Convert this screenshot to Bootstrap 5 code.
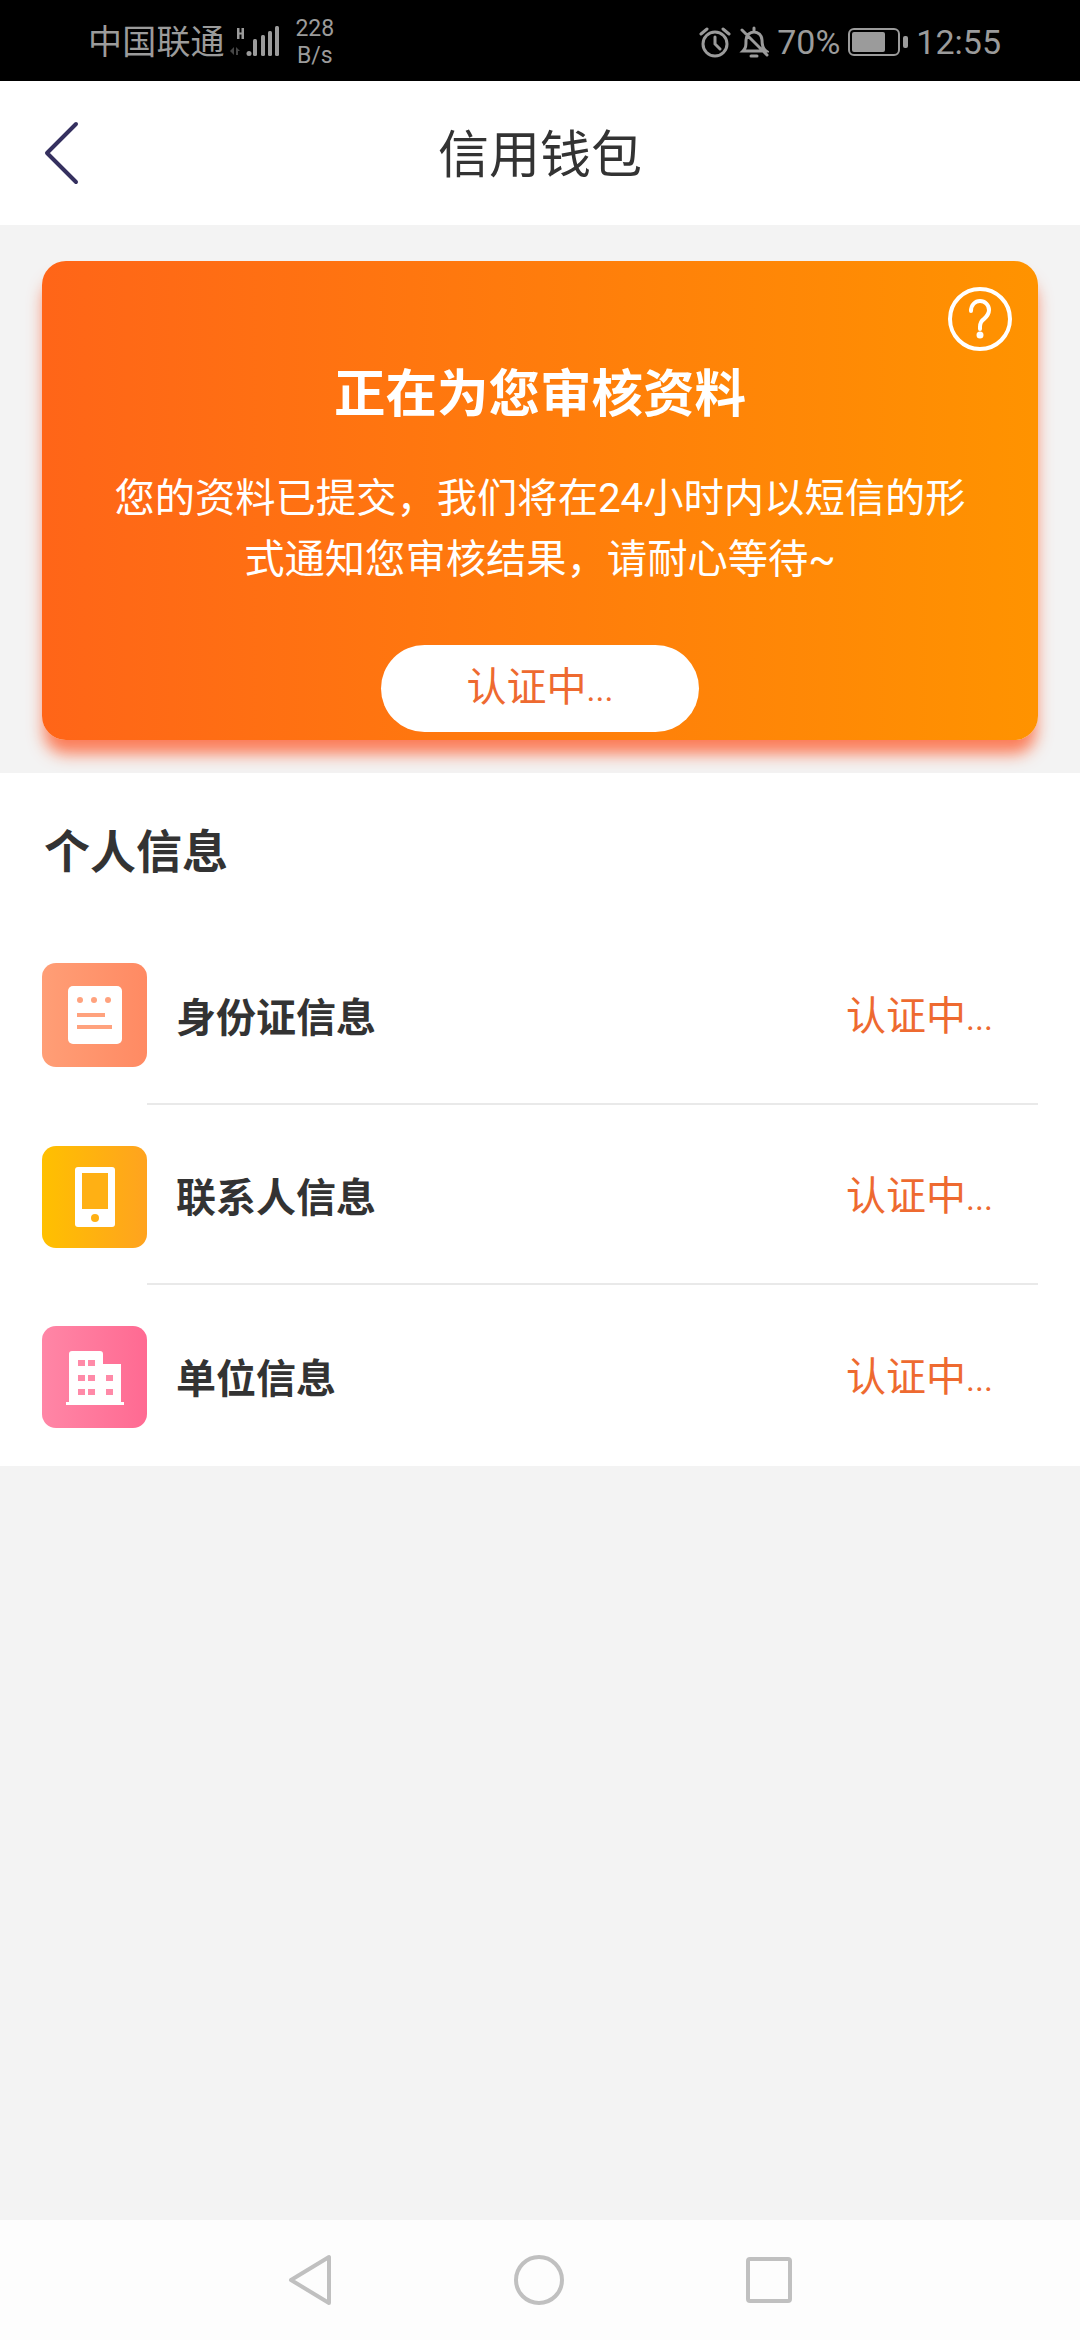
<!DOCTYPE html>
<html lang="zh-CN">
<head>
<meta charset="utf-8">
<title>信用钱包</title>
<link href="https://cdn.jsdelivr.net/npm/bootstrap@5.3.0/dist/css/bootstrap.min.css" rel="stylesheet">
<style>
html,body{height:100%;}
body{width:1080px;height:2340px;background:#f3f3f3;font-family:Roboto,"Noto Sans CJK SC",sans-serif;color:#333;overflow:hidden;}
.sbar{height:81px;background:#000;color:#9b9b9b;padding:2px 79px 0 88px;font-size:34px;line-height:1;}
.carrier{letter-spacing:.2px;}
.speed{font-size:23px;line-height:27px;width:40px;margin-left:16px;}
.topbar{height:144px;background:#fff;}
.backlink{position:absolute;left:44px;top:40px;}
.pagetitle{font-size:51px;line-height:1;color:#333;font-weight:400;margin:0;padding-top:5px;}
.band{padding:36px 42px 33px;}
.hero{height:479px;border-radius:24px;padding:101px 62px 0;color:#fff;background:linear-gradient(90deg,#ff6518 0%,#ff9300 100%);box-shadow:0 16px 16px -2px rgba(255,80,30,.72);}
.help{position:absolute;right:25px;top:25px;}
.herotitle{font-size:51.5px;line-height:66px;font-weight:700;margin:0;}
.herotext{font-size:40.3px;line-height:61px;margin:40px 0 0;}
.pill{display:block;width:318px;height:87px;line-height:80px;margin:55px auto 0;padding:0;border:0;border-radius:44px;background:#fff;color:#ee6a30;font-size:40px;}
.pill:hover,.pill:active{background:#fff!important;color:#ee6a30!important;}
.dots{font-size:34px;}
.infosec{background:#fff;height:693px;}
.sechead{height:152px;padding:5px 0 0 44px;font-size:46px;font-weight:700;line-height:1;margin:0;}
.inforow{height:180px;padding-left:42px;}
.tile{width:105px;height:104px;border-radius:14px;flex:none;}
.tile-a{background:linear-gradient(90deg,#ff9e76,#ff8a63);}
.tile-b{background:linear-gradient(90deg,#ffc000,#ffa31f);margin-top:3px;height:102px;}
.tile-c{background:linear-gradient(90deg,#ff86a6,#ff6a92);margin-top:3px;height:102px;}
.rowbody{height:100%;margin-right:42px;padding:0 45px 0 30px;border-bottom:2px solid #e9e9e9;}
.inforow:last-child .rowbody{border-bottom:0;}
.rowname{font-size:40px;font-weight:700;color:#333;line-height:1;padding-top:9px;margin-left:-1px;}
.rowstate{font-size:40px;color:#ee6a30;line-height:1;padding-top:5px;}
.spacer{flex:1 1 auto;}
.softnav{height:120px;background:#fdfdfd;padding:0 288px 0 288px;}
</style>
</head>
<body class="d-flex flex-column">
<div class="sbar d-flex align-items-center justify-content-between">
  <div class="d-flex align-items-center">
    <span class="carrier">中国联通</span>
    <svg width="50" height="31" viewBox="0 0 50 31" class="ms-1" fill="#9b9b9b">
      <path d="M8 2h2.500v4.500h2V2H15v11h-2.500V8.500h-2V13H8z"/>
      <path d="M1 25l4-4v8zM7 21l4 4H9v4H7z" opacity=".45"/>
      <circle cx="20" cy="27.500" r="2.500"/><rect x="24" y="13" width="4" height="17" rx="1.500"/><rect x="32" y="9" width="4" height="21" rx="1.500"/><rect x="39" y="5" width="4" height="25" rx="1.500"/><rect x="46" y="0" width="4" height="30" rx="1.500"/>
    </svg>
    <span class="speed text-center">228<br>B/s</span>
  </div>
  <div class="d-flex align-items-center">
    <svg width="32" height="32" viewBox="0 0 32 32" fill="none" stroke="#9b9b9b" stroke-width="3" stroke-linecap="round"><circle cx="16" cy="18" r="12"/><path d="M16 11v7l5 5M2 8l6-5M30 8l-6-5"/></svg>
    <svg width="30" height="32" viewBox="0 0 30 32" fill="none" stroke="#9b9b9b" stroke-width="3" stroke-linecap="round" class="ms-2"><path d="M4 25c3-3 3-5 3-11 0-5 4-8 8-8s8 3 8 8c0 6 1 9 4 11zM12 30h6M15 2v4M3 4l25 25"/></svg>
    <span class="ms-2">70%</span>
    <svg width="60" height="28" viewBox="0 0 60 28" class="ms-2" fill="none"><rect x="1" y="1" width="50" height="26" rx="5" stroke="#9b9b9b" stroke-width="2"/><rect x="4" y="4" width="33" height="20" rx="2" fill="#9b9b9b"/><rect x="55" y="8" width="5" height="12" rx="2" fill="#9b9b9b"/></svg>
    <span class="ms-2">12:55</span>
  </div>
</div>

<header class="topbar position-relative d-flex align-items-center justify-content-center">
  <a class="backlink d-block lh-1" href="#" aria-label="返回">
    <svg width="36" height="64" viewBox="0 0 36 64" fill="none" stroke="#35305f" stroke-width="4" stroke-linecap="round" stroke-linejoin="round"><path d="M32 3 3 32l29 29"/></svg>
  </a>
  <h1 class="pagetitle">信用钱包</h1>
</header>

<section class="band">
  <div class="hero position-relative text-center">
    <svg class="help" width="66" height="66" viewBox="0 0 66 66" fill="none" stroke="#fff" stroke-width="4" stroke-linecap="round"><circle cx="33" cy="33" r="30"/><path d="M24 25c0-6 4-10 9-10s9 4 9 9c0 4-2 6-5 9-3 2-4 4-4 8v2"/><circle cx="33" cy="49" r="1.500" fill="#fff"/></svg>
    <h2 class="herotitle">正在为您审核资料</h2>
    <p class="herotext">您的资料已提交，我们将在24小时内以短信的形式通知您审核结果，请耐心等待~</p>
    <button type="button" class="btn pill">认证中<span class="dots">...</span></button>
  </div>
</section>

<section class="infosec">
  <h3 class="sechead d-flex align-items-center">个人信息</h3>
  <div class="inforow d-flex align-items-center">
    <div class="tile tile-a d-flex align-items-center justify-content-center">
      <svg width="54" height="58" viewBox="0 0 54 58"><rect width="54" height="58" rx="5" fill="#fff"/><g fill="#ffa27e"><circle cx="12" cy="14" r="3"/><circle cx="26" cy="14" r="3"/><circle cx="40" cy="14" r="3"/><rect x="9" y="27" width="28" height="4"/><rect x="9" y="39" width="35" height="4"/></g></svg>
    </div>
    <div class="rowbody flex-grow-1 d-flex align-items-center justify-content-between">
      <span class="rowname">身份证信息</span><span class="rowstate">认证中<span class="dots">...</span></span>
    </div>
  </div>
  <div class="inforow d-flex align-items-center">
    <div class="tile tile-b d-flex align-items-center justify-content-center">
      <svg width="40" height="60" viewBox="0 0 40 60"><rect width="40" height="60" rx="3" fill="#fff"/><rect x="7" y="6" width="26" height="36" fill="#ffb014"/><circle cx="20" cy="51" r="4" fill="#ffb014"/></svg>
    </div>
    <div class="rowbody flex-grow-1 d-flex align-items-center justify-content-between">
      <span class="rowname">联系人信息</span><span class="rowstate">认证中<span class="dots">...</span></span>
    </div>
  </div>
  <div class="inforow d-flex align-items-center">
    <div class="tile tile-c d-flex align-items-center justify-content-center">
      <svg width="58" height="56" viewBox="0 0 58 56"><path d="M3 53V5q0-3 3-3h28q3 0 3 3v10h18v38h3v3H0v-3z" fill="#fff"/><g fill="#ff8aa8"><rect x="12" y="11" width="7" height="6"/><rect x="22" y="11" width="7" height="6"/><rect x="12" y="26" width="7" height="6"/><rect x="22" y="26" width="7" height="6"/><rect x="40" y="26" width="7" height="6"/><rect x="12" y="40" width="7" height="6"/><rect x="22" y="40" width="7" height="6"/><rect x="40" y="40" width="7" height="6"/></g></svg>
    </div>
    <div class="rowbody flex-grow-1 d-flex align-items-center justify-content-between">
      <span class="rowname">单位信息</span><span class="rowstate">认证中<span class="dots">...</span></span>
    </div>
  </div>
</section>

<div class="spacer"></div>

<nav class="softnav d-flex align-items-center justify-content-between">
  <svg width="44" height="52" viewBox="0 0 44 52" fill="none" stroke="#c0c0c0" stroke-width="4" stroke-linejoin="round"><path d="M41 3v46L3 26z"/></svg>
  <svg width="50" height="50" viewBox="0 0 50 50" fill="none" stroke="#c0c0c0" stroke-width="4"><circle cx="25" cy="25" r="23"/></svg>
  <svg width="46" height="46" viewBox="0 0 46 46" fill="none" stroke="#c0c0c0" stroke-width="4" stroke-linejoin="round"><rect x="2" y="2" width="42" height="42" rx="2"/></svg>
</nav>
</body>
</html>
